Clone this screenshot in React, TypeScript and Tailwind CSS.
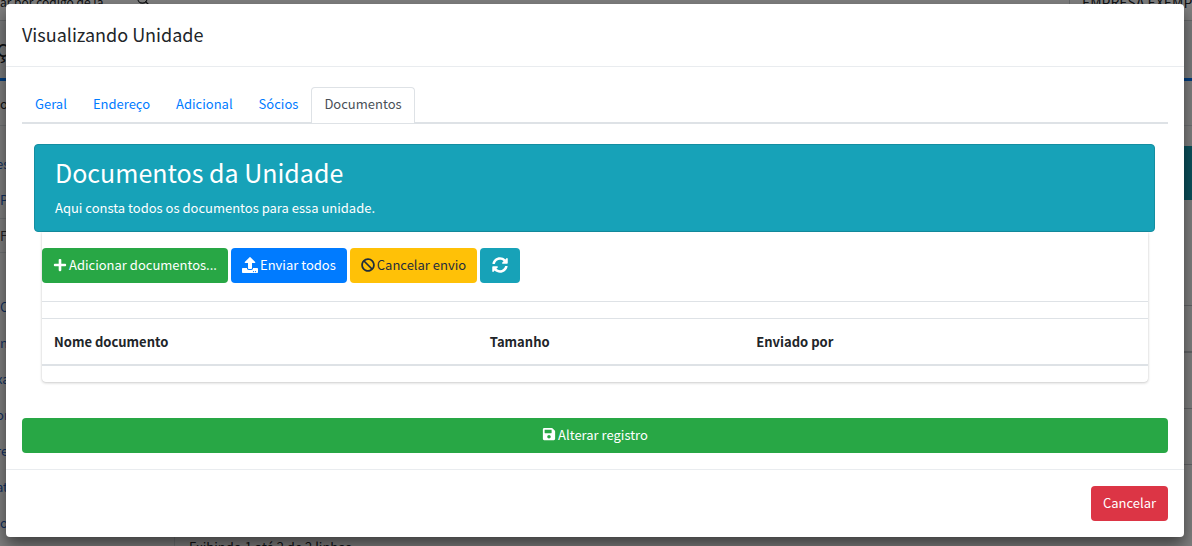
import type { ReactNode } from "react";
import { Search } from "lucide-react";
import { FaBan, FaPlus, FaSave, FaSyncAlt, FaUpload } from "react-icons/fa";

const tabs = ["Geral", "Endereço", "Adicional", "Sócios", "Documentos"];
const menuLinks = ["C", "n", "xa", "or", "re", "at", "o"];

function Button({ className, label, children }: { className: string; label?: string; children: ReactNode }) {
  return (
    <button
      type="button"
      aria-label={label}
      className={`flex h-[35px] items-center justify-center gap-[2px] rounded-[4px] pb-[2px] ${className}`}
    >
      {children}
    </button>
  );
}

function PageBehind() {
  return (
    <div aria-hidden="true" className="absolute inset-0 flex flex-col overflow-hidden bg-[#f4f6f9] whitespace-nowrap">
      <div className="flex h-[21px] shrink-0 border-b border-[#cfd3d7] bg-white leading-[20px]">
        <div className="-mt-2 flex flex-1 gap-8 text-[12px]">
          <span>ar por código de la</span>
          <Search size={14} />
        </div>
        <div className="w-[123px] border-l border-[#cfd3d7] pl-3 text-[14px]">
          <div className="-mt-2">EMPRESA EXEMP</div>
        </div>
      </div>
      <div className="-ml-1 h-[57px] shrink-0 pt-2 text-[24px] leading-[36px]">ç</div>
      <div className="flex min-h-0 flex-1 border-t-[3px] border-[#007bff] bg-white">
        <div className="w-[175px] shrink-0 border-r border-[#dee2e6] text-[#1f5fbf]">
          <div className="h-[45px] border-b border-[#dee2e6] pt-3 leading-[22px] text-[#212529]">o</div>
          <div className="h-[93px] border-b border-[#dee2e6] pt-5 leading-[36px]">
            <div className="-ml-1">es</div>
            <div>P</div>
          </div>
          <div className="h-[34px] border-b border-[#dee2e6] leading-[34px] text-[#444]">F</div>
          <div className="pt-9 leading-[36px]">
            {menuLinks.map((text) => (
              <div key={text} className={text.length > 1 ? "-ml-1" : ""}>
                {text}
              </div>
            ))}
          </div>
        </div>
        <div className="flex flex-1 flex-col">
          <div className="h-[45px] shrink-0 border-b border-[#dee2e6]" />
          <div className="mt-5 h-[54px] shrink-0 bg-[#17a2b8]" />
          <div className="h-[106px] shrink-0 border-b border-[#c6cacf]" />
          <div className="h-[47px] shrink-0 border-b-2 border-[#c6cacf]" />
          <div className="h-[56px] shrink-0 border-b border-[#c6cacf]" />
          <div className="h-[56px] shrink-0 border-b border-[#c6cacf]" />
          <div className="mt-[72px] pl-[14px] leading-[20px]">Exibindo 1 até 2 de 2 linhas</div>
        </div>
      </div>
    </div>
  );
}

export default function App() {
  return (
    <div className="relative min-h-screen overflow-hidden font-['Noto_Sans_CJK_JP','Noto_Sans',sans-serif] text-[13px] leading-[21px] text-[#212529]">
      <PageBehind />
      <div className="absolute inset-0 bg-black/50" />
      <div className="relative pt-1 pr-2 pb-[9px] pl-[6px]">
        <div
          role="dialog"
          aria-labelledby="dialog-title"
          className="rounded-[4px] bg-white shadow-[0_8px_16px_rgba(0,0,0,0.5)]"
        >
          <header className="border-b border-[#e9ecef] px-4 pt-4 pb-[18px]">
            <h5 id="dialog-title" className="text-[18px] leading-[28px]">
              Visualizando Unidade
            </h5>
          </header>

          <div className="px-4 pt-5 pb-4">
            <nav className="flex border-b-2 border-[#dee2e6]">
              {tabs.map((tab) => (
                <a
                  key={tab}
                  href="#"
                  className={
                    tab === "Documentos"
                      ? "-mb-px rounded-t-[4px] border border-b-0 border-[#dee2e6] bg-white px-3 pt-[5px] pb-[9px] text-[#495057]"
                      : "-mb-px border border-b-0 border-transparent px-3 pt-[5px] pb-[9px] text-[#007bff]"
                  }
                >
                  {tab}
                </a>
              ))}
            </nav>

            <section className="mt-5 mr-[13px] ml-3">
              <div className="rounded-[4px] border border-[#148ea1] bg-[#17a2b8] px-5 pt-[10px] pb-[13px] text-white">
                <h2 className="text-[25px] leading-[34px]">Documentos da Unidade</h2>
                <p className="mt-2">Aqui consta todos os documentos para essa unidade.</p>
              </div>

              <div className="mr-[7px] ml-2 rounded-b-[4px] pt-4 pb-4 shadow-[0_0_1px_rgba(0,0,0,0.13),0_1px_3px_rgba(0,0,0,0.2)]">
                <div className="flex gap-[3px]">
                  <Button className="bg-[#28a745] px-[11px] text-white">
                    <FaPlus size={14} />
                    Adicionar documentos...
                  </Button>
                  <Button className="bg-[#007bff] px-[11px] text-white">
                    <FaUpload size={16} />
                    Enviar todos
                  </Button>
                  <Button className="bg-[#ffc107] px-[11px] text-[#1f2d3d]">
                    <FaBan size={14} />
                    Cancelar envio
                  </Button>
                  <Button label="Atualizar" className="bg-[#17a2b8] px-3 text-white">
                    <FaSyncAlt size={16} />
                  </Button>
                </div>
                <div className="mt-[18px] border-t border-[#dee2e6] pt-4">
                  <table className="w-full table-fixed border-collapse text-left">
                    <thead>
                      <tr className="h-[46px] border-t border-b-2 border-[#dee2e6]">
                        <th className="w-[39.4%] px-3 font-bold">Nome documento</th>
                        <th className="w-[24.1%] px-3 font-bold">Tamanho</th>
                        <th className="px-3 font-bold">Enviado por</th>
                      </tr>
                    </thead>
                    <tbody />
                  </table>
                </div>
              </div>
            </section>

            <Button className="mt-9 w-full bg-[#28a745] px-3 text-white">
              <FaSave size={14} />
              Alterar registro
            </Button>
          </div>

          <footer className="flex justify-end border-t border-[#e9ecef] p-4">
            <Button className="bg-[#dc3545] px-3 text-white">Cancelar</Button>
          </footer>
        </div>
      </div>
    </div>
  );
}
